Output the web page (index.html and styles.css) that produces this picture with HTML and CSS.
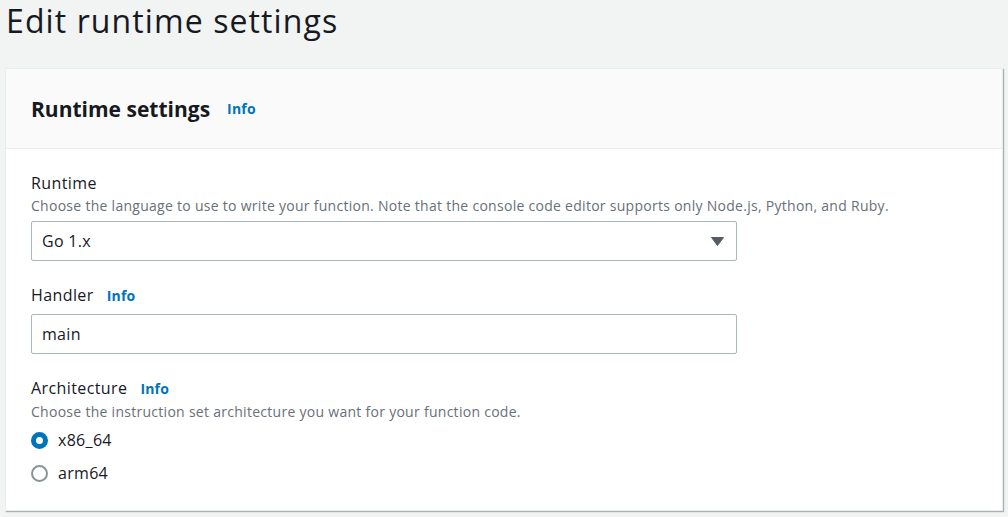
FILE: index.html
```html
<!DOCTYPE html>
<html>
<head>
<meta charset="utf-8">
<link rel="stylesheet" href="styles.css">
</head>
<body>
<h1 class="page-title">Edit runtime settings</h1>
<div class="container">
  <div class="container-header">
    <h2 class="header-title">Runtime settings</h2>
    <a class="info" href="#">Info</a>
  </div>
  <div class="container-body">
    <div class="field">
      <div class="label-row"><span class="label">Runtime</span></div>
      <div class="desc">Choose the language to use to write your function. Note that the console code editor supports only Node.js, Python, and Ruby.</div>
      <div class="select">
        <span>Go 1.x</span>
        <svg class="caret" width="13" height="9" viewBox="0 0 13 9"><path d="M0.5 0.5 H12.5 L6.5 8.5 Z" fill="#545b64" stroke="#545b64" stroke-linejoin="round" stroke-width="1"/></svg>
      </div>
    </div>
    <div class="field">
      <div class="label-row"><span class="label">Handler</span><a class="info" href="#">Info</a></div>
      <div class="input"><span>main</span></div>
    </div>
    <div class="field">
      <div class="label-row"><span class="label">Architecture</span><a class="info" href="#">Info</a></div>
      <div class="desc">Choose the instruction set architecture you want for your function code.</div>
      <div class="radios">
        <div class="radio"><span class="dot checked"></span><span>x86_64</span></div>
        <div class="radio"><span class="dot"></span><span>arm64</span></div>
      </div>
    </div>
  </div>
</div>
</body>
</html>
```
FILE: styles.css
```css
* { box-sizing: border-box; }
html, body { margin: 0; padding: 0; }
body {
  background: #f2f3f3;
  font-family: "Open Sans", "Noto Sans", sans-serif;
  color: #16191f;
  padding: 0 5px;
  height: 517px;
  overflow: hidden;
}
.page-title {
  margin: 0 0 0 1px;
  padding-top: 1px;
  font-size: 32px;
  font-weight: 400;
  letter-spacing: 1.1px;
  line-height: 40px;
  height: 68px;
}
.container {
  background: #fff;
  border: 1px solid #eaeded;
  box-shadow: 1px 1px 1px 0 rgba(0,28,36,0.3);
  width: 998px;
}
.container-header {
  background: #fafafa;
  border-bottom: 1px solid #eaeded;
  height: 80px;
  display: flex;
  align-items: center;
  padding: 0 25px;
}
.header-title {
  margin: 0;
  font-size: 21px;
  font-weight: 700;
  line-height: 28px;
  padding-top: 1px;
}
.info {
  color: #0073bb;
  font-weight: 700;
  font-size: 14px;
  text-decoration: none;
  margin-left: 17px;
  letter-spacing: 0.2px;
}
.container-body {
  padding: 23px 25px 25px;
  display: flex;
  flex-direction: column;
  gap: 23px;
}
.label-row {
  display: flex;
  align-items: baseline;
  line-height: 22px;
}
.label-row .info { margin-left: 13px; }
.label {
  font-size: 16px;
  letter-spacing: 0.4px;
}
.desc {
  font-size: 14px;
  color: #687078;
  line-height: 20px;
  margin-top: 2px;
  letter-spacing: 0.28px;
}
.select, .input {
  width: 706px;
  height: 40px;
  border: 1px solid #aab7b8;
  border-radius: 2px;
  display: flex;
  align-items: center;
  justify-content: space-between;
  padding: 0 12px 0 10px;
  font-size: 16px;
  letter-spacing: 0.3px;
}
.select { margin-top: 5px; }
.input { margin-top: 7px; }
.caret { display: block; }
.radios {
  display: flex;
  flex-direction: column;
  gap: 9px;
  margin-top: 6px;
  font-size: 16px;
  letter-spacing: 0.3px;
}
.radio {
  display: flex;
  align-items: center;
  gap: 10px;
  height: 24px;
}
.dot {
  width: 17px;
  height: 17px;
  border-radius: 50%;
  border: 2px solid #879596;
  background: #fff;
}
.dot.checked {
  border: 5px solid #0073bb;
}
```
